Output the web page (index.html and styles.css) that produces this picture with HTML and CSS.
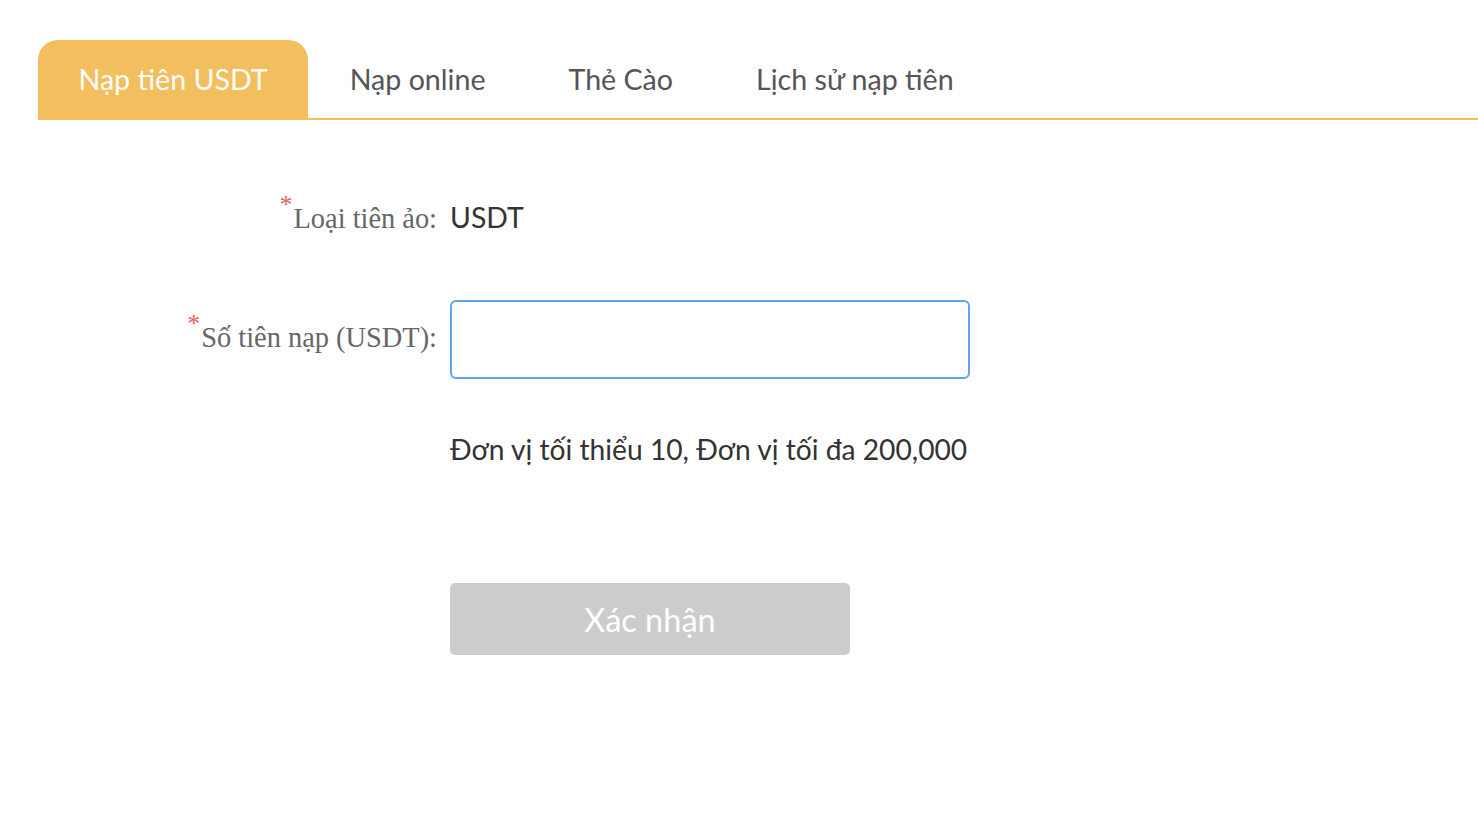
FILE: index.html
```html
<!DOCTYPE html>
<html lang="vi">
<head>
<meta charset="utf-8">
<title>Nạp tiên</title>
<link rel="stylesheet" href="styles.css">
</head>
<body>
<div class="page">
  <nav class="tabs">
    <div class="tab active">Nạp tiên USDT</div>
    <div class="tab">Nạp online</div>
    <div class="tab">Thẻ Cào</div>
    <div class="tab">Lịch sử nạp tiên</div>
  </nav>
  <form class="form">
    <div class="row row-type">
      <label class="label"><span class="req">*</span>Loại tiên ảo:</label>
      <div class="value">USDT</div>
    </div>
    <div class="row row-amount">
      <label class="label"><span class="req">*</span>Số tiên nạp (USDT):</label>
      <input class="input" type="text">
    </div>
    <div class="row row-hint">
      <div class="label"></div>
      <div class="hint">Đơn vị tối thiểu 10, Đơn vị tối đa 200,000</div>
    </div>
    <div class="row row-btn">
      <div class="label"></div>
      <button type="button" class="btn">Xác nhận</button>
    </div>
  </form>
</div>
</body>
</html>
```
FILE: styles.css
```css
html, body {
  margin: 0;
  padding: 0;
  background: #fff;
}
.page {
  padding: 40px 0 0 38px;
}
.tabs {
  display: flex;
  border-bottom: 2px solid #f3be5d;
  height: 78px;
}
.tab {
  font-family: Lato, "Open Sans", sans-serif;
  font-size: 28.6px;
  color: #555;
  padding: 0 41.5px;
  line-height: 78px;
  white-space: nowrap;
}
.tab.active {
  background: #f3be5d;
  color: #fff;
  border-radius: 20px 20px 0 0;
  padding: 0 40.5px;
}
.form {
  display: flex;
  flex-direction: column;
}
.row {
  display: flex;
  align-items: center;
}
.label {
  width: 412px;
  flex: none;
  text-align: right;
  font-family: "Liberation Serif", serif;
  font-size: 28.4px;
  color: #666;
  padding-right: 13px;
  box-sizing: border-box;
}
.req {
  color: #e8625c;
  font-size: 26px;
  vertical-align: 15px;
  margin-right: 1px;
}
.value {
  font-family: Lato, sans-serif;
  font-size: 28.4px;
  color: #333;
}
.row-type {
  margin-top: 70px;
  height: 40px;
  align-items: baseline;
}
.row-amount {
  margin-top: 70px;
}
.row-amount .label {
  padding-bottom: 16px;
}
.input {
  width: 520px;
  height: 79px;
  box-sizing: border-box;
  border: 2px solid #5ea3f5;
  border-radius: 6px;
  outline: none;
  margin: 0;
  padding: 0 12px;
  font-size: 24px;
}
.row-hint {
  margin-top: 53px;
}
.hint {
  font-family: Lato, sans-serif;
  font-size: 28.2px;
  color: #333;
}
.row-btn {
  margin-top: 117px;
}
.btn {
  width: 400px;
  height: 72px;
  border: none;
  border-radius: 5px;
  background: #cccccc;
  color: #fff;
  font-family: Lato, sans-serif;
  font-size: 32.5px;
  margin: 0;
  padding: 0;
}
```
